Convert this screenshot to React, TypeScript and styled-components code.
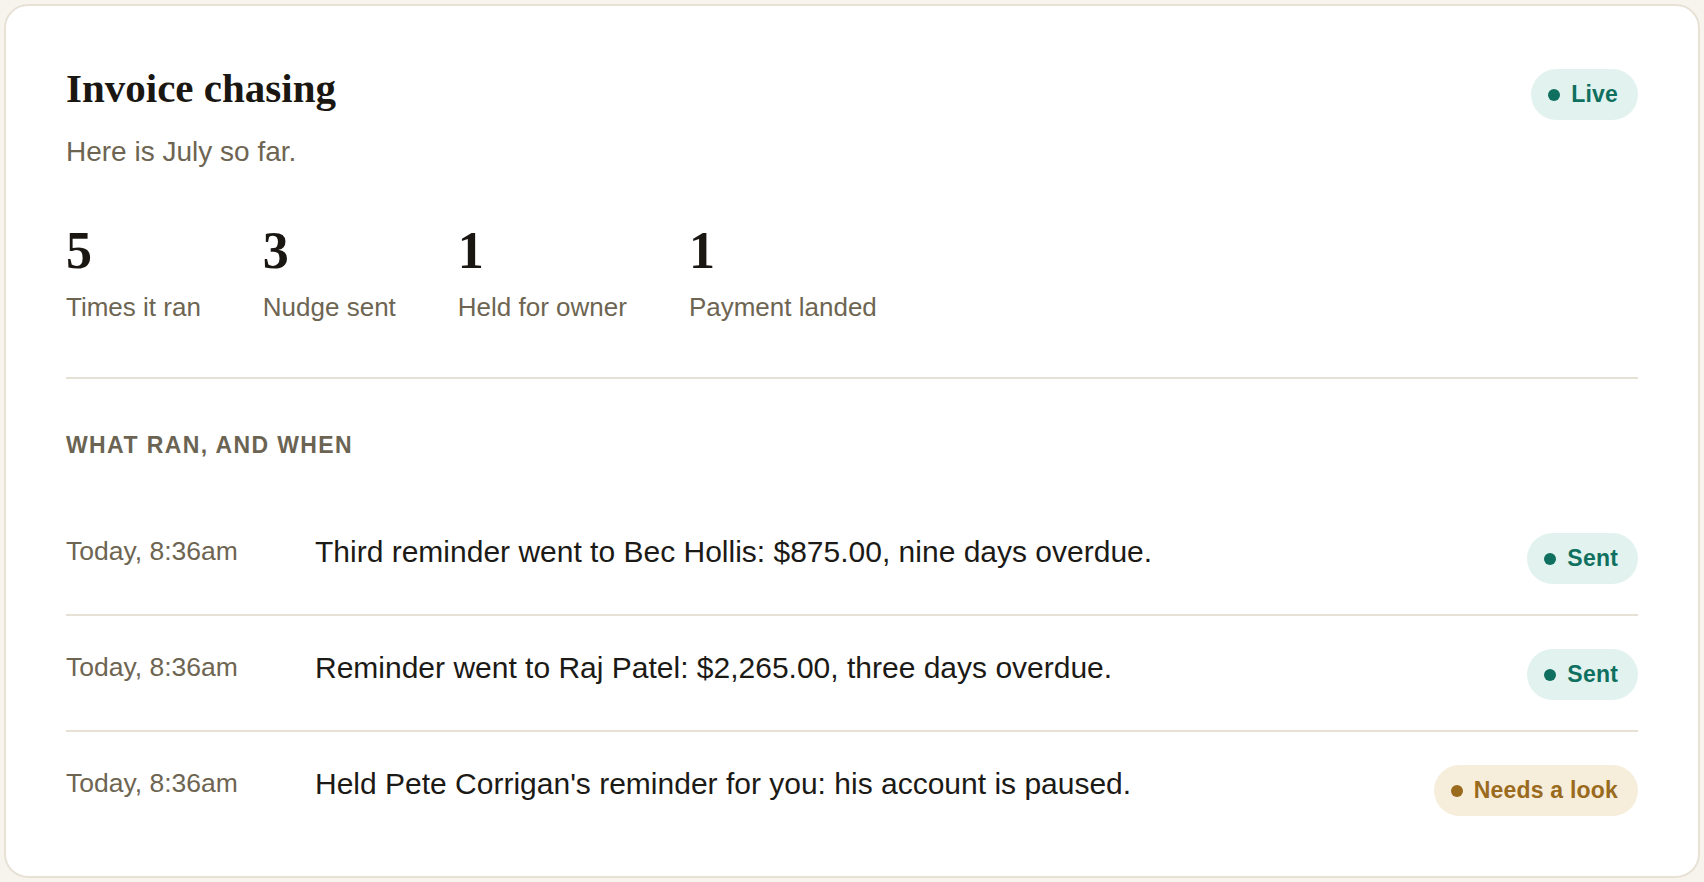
import React from "react";
import styled, { createGlobalStyle } from "styled-components";

const GlobalStyle = createGlobalStyle`
  * {
    box-sizing: border-box;
  }
  body {
    margin: 0;
    background: #f7f4ee;
    font-family: "Liberation Sans", Arial, sans-serif;
  }
`;

const Page = styled.div`
  padding: 4px;
`;

const Card = styled.section`
  min-height: calc(100vh - 8px);
  background: #fff;
  border: 2px solid #e8e2d6;
  border-radius: 24px;
  padding: 58px 60px 30px;
`;

const Header = styled.div`
  display: flex;
  justify-content: space-between;
  align-items: flex-start;
`;

const Title = styled.h1`
  margin: 0;
  font-family: "Liberation Serif", "Times New Roman", serif;
  font-weight: 700;
  font-size: 41px;
  line-height: 48px;
  color: #1a1712;
`;

const Subtitle = styled.p`
  margin: 19px 0 0;
  font-size: 28px;
  line-height: 42px;
  color: #6d6552;
`;

const Pill = styled.span<{ $tone: "green" | "amber" }>`
  display: inline-flex;
  align-items: center;
  gap: 11px;
  height: 51px;
  padding: 0 20px 0 17px;
  border-radius: 26px;
  font-size: 23px;
  font-weight: 700;
  letter-spacing: 0.2px;
  white-space: nowrap;
  background: ${(p) => (p.$tone === "green" ? "#e2f3ef" : "#f6eddb")};
  color: ${(p) => (p.$tone === "green" ? "#10705f" : "#9a6a1d")};
`;

const Dot = styled.span`
  width: 12px;
  height: 12px;
  border-radius: 50%;
  background: currentColor;
  flex: none;
`;

const LivePill = styled(Pill)`
  margin-top: 5px;
`;

const Stats = styled.div`
  display: flex;
  gap: 62px;
  margin-top: 52px;
`;

const Stat = styled.div`
  display: flex;
  flex-direction: column;
  gap: 12px;
`;

const StatValue = styled.div`
  font-family: "Liberation Serif", "Times New Roman", serif;
  font-weight: 700;
  font-size: 52px;
  line-height: 52px;
  color: #1a1712;
`;

const StatLabel = styled.div`
  font-size: 26px;
  line-height: 36px;
  color: #6d6552;
`;

const Divider = styled.hr`
  margin: 52px 0 0;
  border: none;
  height: 2px;
  background: #e6e1d4;
`;

const SectionLabel = styled.h2`
  margin: 50px 0 0;
  font-size: 23px;
  line-height: 32px;
  font-weight: 700;
  letter-spacing: 1.4px;
  text-transform: uppercase;
  color: #6b6453;
`;

const RunList = styled.ul`
  list-style: none;
  margin: 39px 0 0;
  padding: 0;
`;

const RunRow = styled.li`
  display: grid;
  grid-template-columns: 249px 1fr auto;
  align-items: start;
  padding: 29px 0 30px;
  border-bottom: 2px solid #e6e1d4;
  &:last-child {
    border-bottom: none;
  }
`;

const RunTime = styled.span`
  font-size: 26.5px;
  line-height: 45px;
  color: #6d6552;
`;

const RunText = styled.span`
  font-size: 30px;
  line-height: 45px;
  color: #1c1a16;
`;

const RunPill = styled(Pill)`
  margin-top: 4px;
`;

const stats = [
  { value: 5, label: "Times it ran" },
  { value: 3, label: "Nudge sent" },
  { value: 1, label: "Held for owner" },
  { value: 1, label: "Payment landed" },
];

const runs: { time: string; text: string; status: string; tone: "green" | "amber" }[] = [
  {
    time: "Today, 8:36am",
    text: "Third reminder went to Bec Hollis: $875.00, nine days overdue.",
    status: "Sent",
    tone: "green",
  },
  {
    time: "Today, 8:36am",
    text: "Reminder went to Raj Patel: $2,265.00, three days overdue.",
    status: "Sent",
    tone: "green",
  },
  {
    time: "Today, 8:36am",
    text: "Held Pete Corrigan's reminder for you: his account is paused.",
    status: "Needs a look",
    tone: "amber",
  },
];

export default function App() {
  return (
    <Page>
      <GlobalStyle />
      <Card>
        <Header>
          <div>
            <Title>Invoice chasing</Title>
            <Subtitle>Here is July so far.</Subtitle>
          </div>
          <LivePill $tone="green">
            <Dot />
            Live
          </LivePill>
        </Header>

        <Stats>
          {stats.map((s) => (
            <Stat key={s.label}>
              <StatValue>{s.value}</StatValue>
              <StatLabel>{s.label}</StatLabel>
            </Stat>
          ))}
        </Stats>

        <Divider />

        <SectionLabel>What ran, and when</SectionLabel>
        <RunList>
          {runs.map((r) => (
            <RunRow key={r.text}>
              <RunTime>{r.time}</RunTime>
              <RunText>{r.text}</RunText>
              <RunPill $tone={r.tone}>
                <Dot />
                {r.status}
              </RunPill>
            </RunRow>
          ))}
        </RunList>
      </Card>
    </Page>
  );
}
